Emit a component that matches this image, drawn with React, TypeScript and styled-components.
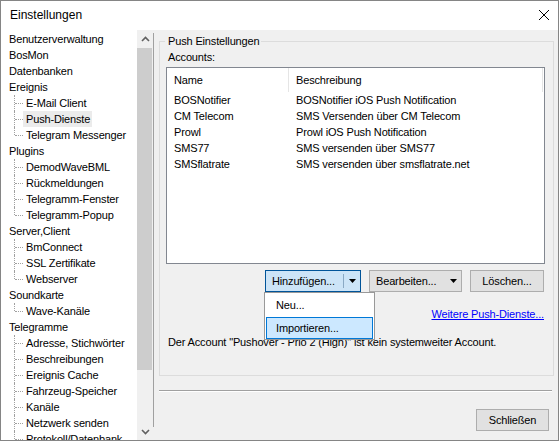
import React from 'react';
import styled, { createGlobalStyle } from 'styled-components';

const GlobalStyle = createGlobalStyle`
  html, body {
    margin: 0;
    padding: 0;
    background: #ffffff;
  }
  * {
    box-sizing: border-box;
  }
`;

const Window = styled.div`
  width: 559px;
  height: 441px;
  border: 1px solid #858585;
  background: #f0f0f0;
  display: flex;
  flex-direction: column;
  font-family: 'Liberation Sans', Arial, sans-serif;
  font-size: 11px;
  letter-spacing: -0.15px;
  color: #000;
  overflow: hidden;
`;

const TitleBar = styled.div`
  height: 29px;
  flex: none;
  background: #ffffff;
  display: flex;
  align-items: center;
  justify-content: space-between;
  padding: 0 10px 2px 9px;
  font-size: 12px;
  letter-spacing: 0;
`;

const CloseButton = styled.div`
  width: 12px;
  height: 12px;
  display: flex;
  margin-right: -2px;
`;

const Body = styled.div`
  flex: 1;
  display: flex;
  min-height: 0;
`;

const Tree = styled.div`
  width: 136px;
  background: #ffffff;
  padding-top: 1px;
  overflow: hidden;
`;

const TreeRow = styled.div<{ $child?: boolean; $last?: boolean }>`
  position: relative;
  height: 16px;
  line-height: 16px;
  padding-left: ${p => (p.$child ? '22px' : '5px')};
  white-space: nowrap;

  ${p =>
    p.$child &&
    `
    &::before {
      content: '';
      position: absolute;
      left: 13px;
      top: 0;
      height: ${p.$last ? '8px' : '16px'};
      border-left: 1px dotted #a0a0a0;
    }
    &::after {
      content: '';
      position: absolute;
      left: 14px;
      top: 8px;
      width: 8px;
      border-top: 1px dotted #a0a0a0;
    }
  `}
`;

const TreeLabel = styled.span<{ $selected?: boolean }>`
  display: inline-block;
  padding: 0 2px 0 3px;
  background: ${p => (p.$selected ? '#ebebeb' : 'transparent')};
`;

const ScrollBar = styled.div`
  width: 16px;
  background: #f0f0f0;
  display: flex;
  flex-direction: column;
  align-items: center;
`;

const ScrollArrow = styled.div`
  height: 17px;
  width: 100%;
  display: flex;
  align-items: center;
  justify-content: center;
`;

const ScrollThumb = styled.div`
  width: 15px;
  height: 322px;
  margin: 1px 1px 0 0;
  background: #cdcdcd;
`;

const ScrollSpace = styled.div`
  flex: 1;
`;

const Splitter = styled.div`
  width: 1px;
  margin: 3px 0 13px;
  background: #a0a0a0;
`;

const RightPanel = styled.div`
  flex: 1;
  display: flex;
  flex-direction: column;
  padding: 5px 4px 0 5px;
`;

const GroupBox = styled.fieldset`
  margin: 0;
  padding: 0 8px 26px 5px;
  border: 1px solid #dcdcdc;
  display: flex;
  flex-direction: column;
  align-items: flex-end;
`;

const Legend = styled.legend`
  padding: 0 2px 0 3px;
  line-height: 13px;
`;

const Label = styled.div`
  align-self: stretch;
  line-height: 13px;
  margin-top: 3px;
  padding-left: 3px;
`;

const ListBox = styled.div`
  width: 379px;
  height: 197px;
  margin-top: 3px;
  border: 1px solid #828790;
  background: #ffffff;
`;

const ListHeader = styled.div`
  display: grid;
  grid-template-columns: 122px 254px;
  height: 24px;
`;

const HeaderCell = styled.div`
  border-right: 1px solid #e5e5e5;
  padding-left: 7px;
  line-height: 24px;
`;

const ListRow = styled.div`
  display: grid;
  grid-template-columns: 122px 254px;
  height: 16px;
  line-height: 16px;
`;

const Cell = styled.div`
  padding-left: 7px;
  white-space: nowrap;
`;

const ButtonRow = styled.div`
  display: flex;
  gap: 8px;
  margin: 6px 1px 0 0;
`;

const Button = styled.div<{ $width: number; $focused?: boolean }>`
  position: relative;
  width: ${p => p.$width}px;
  height: 22px;
  border: 1px solid ${p => (p.$focused ? '#005499' : '#adadad')};
  background: ${p => (p.$focused ? '#cce4f7' : '#e1e1e1')};
  display: flex;
  align-items: center;
  line-height: 20px;
`;

const ButtonText = styled.span<{ $center?: boolean }>`
  flex: 1;
  padding-left: ${p => (p.$center ? '0' : '6px')};
  text-align: ${p => (p.$center ? 'center' : 'left')};
`;

const SplitPart = styled.div<{ $divider?: boolean }>`
  width: 17px;
  height: 14px;
  display: flex;
  align-items: center;
  justify-content: center;
  border-left: 1px solid ${p => (p.$divider ? '#8aa9c4' : 'transparent')};
`;

const Menu = styled.div`
  position: absolute;
  left: -2px;
  top: 21px;
  width: 111px;
  height: 48px;
  background: #ffffff;
  border: 1px solid #999999;
  padding: 1px;
  z-index: 2;
`;

const MenuItem = styled.div<{ $active?: boolean }>`
  height: 22px;
  line-height: 20px;
  margin-top: ${p => (p.$active ? '1px' : '0')};
  padding-left: 9px;
  border: 1px solid ${p => (p.$active ? '#0078d7' : 'transparent')};
  background: ${p => (p.$active ? '#cce8ff' : 'transparent')};
`;

const Link = styled.a`
  margin: 16px 1px 0 0;
  line-height: 13px;
  color: #0000ff;
  text-decoration: underline;
  cursor: pointer;
`;

const Message = styled.div`
  align-self: stretch;
  margin-top: 15px;
  padding-left: 3px;
  line-height: 13px;
  white-space: nowrap;
`;

const Separator = styled.div`
  margin: 14px 2px 0 0;
  border-top: 1px solid #a0a0a0;
  border-bottom: 1px solid #ffffff;
`;

const Footer = styled.div`
  display: flex;
  justify-content: flex-end;
  margin-top: 17px;
  padding-right: 5px;
`;

type TreeNode = { label: string; children?: string[]; more?: boolean };

const tree: TreeNode[] = [
  { label: 'Benutzerverwaltung' },
  { label: 'BosMon' },
  { label: 'Datenbanken' },
  { label: 'Ereignis', children: ['E-Mail Client', 'Push-Dienste', 'Telegram Messenger'] },
  { label: 'Plugins', children: ['DemodWaveBML', 'Rückmeldungen', 'Telegramm-Fenster', 'Telegramm-Popup'] },
  { label: 'Server,Client', children: ['BmConnect', 'SSL Zertifikate', 'Webserver'] },
  { label: 'Soundkarte', children: ['Wave-Kanäle'] },
  {
    label: 'Telegramme',
    more: true,
    children: [
      'Adresse, Stichwörter',
      'Beschreibungen',
      'Ereignis Cache',
      'Fahrzeug-Speicher',
      'Kanäle',
      'Netzwerk senden',
      'Protokoll/Datenbank',
    ],
  },
];

const accounts = [
  ['BOSNotifier', 'BOSNotifier iOS Push Notification'],
  ['CM Telecom', 'SMS Versenden über CM Telecom'],
  ['Prowl', 'Prowl iOS Push Notification'],
  ['SMS77', 'SMS versenden über SMS77'],
  ['SMSflatrate', 'SMS versenden über smsflatrate.net'],
];

const Caret = () => (
  <svg width="7" height="4" viewBox="0 0 7 4">
    <path d="M0 0h7L3.5 4z" fill="#000" />
  </svg>
);

const Chevron = ({ up }: { up?: boolean }) => (
  <svg width="9" height="6" viewBox="0 0 9 6">
    <path
      d={up ? 'M1 5L4.5 1.5L8 5' : 'M1 1L4.5 4.5L8 1'}
      fill="none"
      stroke="#606060"
      strokeWidth="1.6"
    />
  </svg>
);

export default function App() {
  return (
    <>
      <GlobalStyle />
      <Window>
        <TitleBar>
          <span>Einstellungen</span>
          <CloseButton>
            <svg width="12" height="12" viewBox="0 0 12 12">
              <path d="M1 1L11 11M11 1L1 11" stroke="#000" strokeWidth="1" />
            </svg>
          </CloseButton>
        </TitleBar>
        <Body>
          <Tree>
            {tree.map(node => (
              <React.Fragment key={node.label}>
                <TreeRow>
                  <TreeLabel>{node.label}</TreeLabel>
                </TreeRow>
                {node.children?.map((child, i, arr) => (
                  <TreeRow key={child} $child $last={!node.more && i === arr.length - 1}>
                    <TreeLabel $selected={child === 'Push-Dienste'}>{child}</TreeLabel>
                  </TreeRow>
                ))}
              </React.Fragment>
            ))}
          </Tree>
          <ScrollBar>
            <ScrollArrow>
              <Chevron up />
            </ScrollArrow>
            <ScrollThumb />
            <ScrollSpace />
            <ScrollArrow>
              <Chevron />
            </ScrollArrow>
          </ScrollBar>
          <Splitter />
          <RightPanel>
            <GroupBox>
              <Legend>Push Einstellungen</Legend>
              <Label>Accounts:</Label>
              <ListBox>
                <ListHeader>
                  <HeaderCell>Name</HeaderCell>
                  <HeaderCell>Beschreibung</HeaderCell>
                </ListHeader>
                {accounts.map(([name, desc]) => (
                  <ListRow key={name}>
                    <Cell>{name}</Cell>
                    <Cell>{desc}</Cell>
                  </ListRow>
                ))}
              </ListBox>
              <ButtonRow>
                <Button $width={96} $focused>
                  <ButtonText>Hinzufügen...</ButtonText>
                  <SplitPart $divider>
                    <Caret />
                  </SplitPart>
                  <Menu>
                    <MenuItem>Neu...</MenuItem>
                    <MenuItem $active>Importieren...</MenuItem>
                  </Menu>
                </Button>
                <Button $width={93}>
                  <ButtonText>Bearbeiten...</ButtonText>
                  <SplitPart>
                    <Caret />
                  </SplitPart>
                </Button>
                <Button $width={74}>
                  <ButtonText $center>Löschen...</ButtonText>
                </Button>
              </ButtonRow>
              <Link>Weitere Push-Dienste...</Link>
              <Message>Der Account "Pushover - Prio 2 (High)" ist kein systemweiter Account.</Message>
            </GroupBox>
            <Separator />
            <Footer>
              <Button $width={73}>
                <ButtonText $center>Schließen</ButtonText>
              </Button>
            </Footer>
          </RightPanel>
        </Body>
      </Window>
    </>
  );
}
